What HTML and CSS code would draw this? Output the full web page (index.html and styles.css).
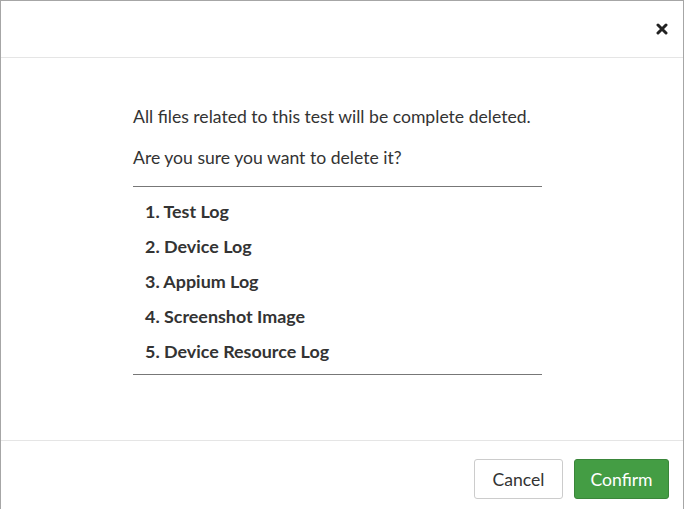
FILE: index.html
```html
<!DOCTYPE html>
<html>
<head>
<meta charset="utf-8">
<link rel="stylesheet" href="styles.css">
</head>
<body>
<div class="modal">
  <div class="modal-header">
    <button class="close" aria-label="Close">
      <svg width="12" height="12" viewBox="0 0 12 12"><path d="M2 2 L10 10 M10 2 L2 10" stroke="#222" stroke-width="3" stroke-linecap="round"/></svg>
    </button>
  </div>
  <div class="modal-body">
    <div class="content">
      <p class="msg first">All files related to this test will be complete deleted.</p>
      <p class="msg second">Are you sure you want to delete it?</p>
      <ul class="files">
        <li>1. Test Log</li>
        <li>2. Device Log</li>
        <li>3. Appium Log</li>
        <li>4. Screenshot Image</li>
        <li>5. Device Resource Log</li>
      </ul>
    </div>
  </div>
  <div class="modal-footer">
    <button class="btn btn-default">Cancel</button>
    <button class="btn btn-success">Confirm</button>
  </div>
</div>
</body>
</html>
```
FILE: styles.css
```css
html, body {
  margin: 0;
  padding: 0;
  background: #fff;
}
body {
  font-family: "Lato", "Open Sans", sans-serif;
  color: #333;
}
.modal {
  border: 1px solid #a6a6a6;
  border-bottom: none;
  height: 509px;
  display: flex;
  flex-direction: column;
  box-sizing: border-box;
}
.modal-header {
  height: 56px;
  border-bottom: 1px solid #e5e5e5;
  display: flex;
  justify-content: flex-end;
  align-items: center;
  padding-right: 15px;
}
.close {
  background: none;
  border: none;
  padding: 0;
  width: 12px;
  height: 12px;
  display: flex;
  cursor: pointer;
}
.modal-body {
  flex: 1;
  display: flex;
  padding-left: 132px;
}
.content {
  width: 409px;
}
.msg {
  margin: 0;
  font-size: 17.6px;
  line-height: 22px;
}
.first {
  margin-top: 48px;
}
.second {
  margin-top: 19px;
  padding-bottom: 17px;
  border-bottom: 1px solid #777;
}
.files {
  list-style: none;
  margin: 0;
  padding: 7px 0 5px 12px;
  border-bottom: 1px solid #777;
}
.files li {
  font-weight: bold;
  font-size: 17.9px;
  line-height: 35px;
}
.modal-footer {
  border-top: 1px solid #e5e5e5;
  height: 69px;
  display: flex;
  justify-content: flex-end;
  align-items: flex-start;
  gap: 11px;
  padding: 18px 14px 0 0;
  box-sizing: border-box;
}
.btn {
  font-family: inherit;
  font-size: 17.6px;
  height: 40px;
  border-radius: 3px;
  padding: 0;
  cursor: pointer;
}
.btn-default {
  background: #fff;
  border: 1px solid #ccc;
  color: #333;
  width: 89px;
}
.btn-success {
  background: #449d44;
  border: 1px solid #3a863a;
  color: #fff;
  width: 95px;
}
```
